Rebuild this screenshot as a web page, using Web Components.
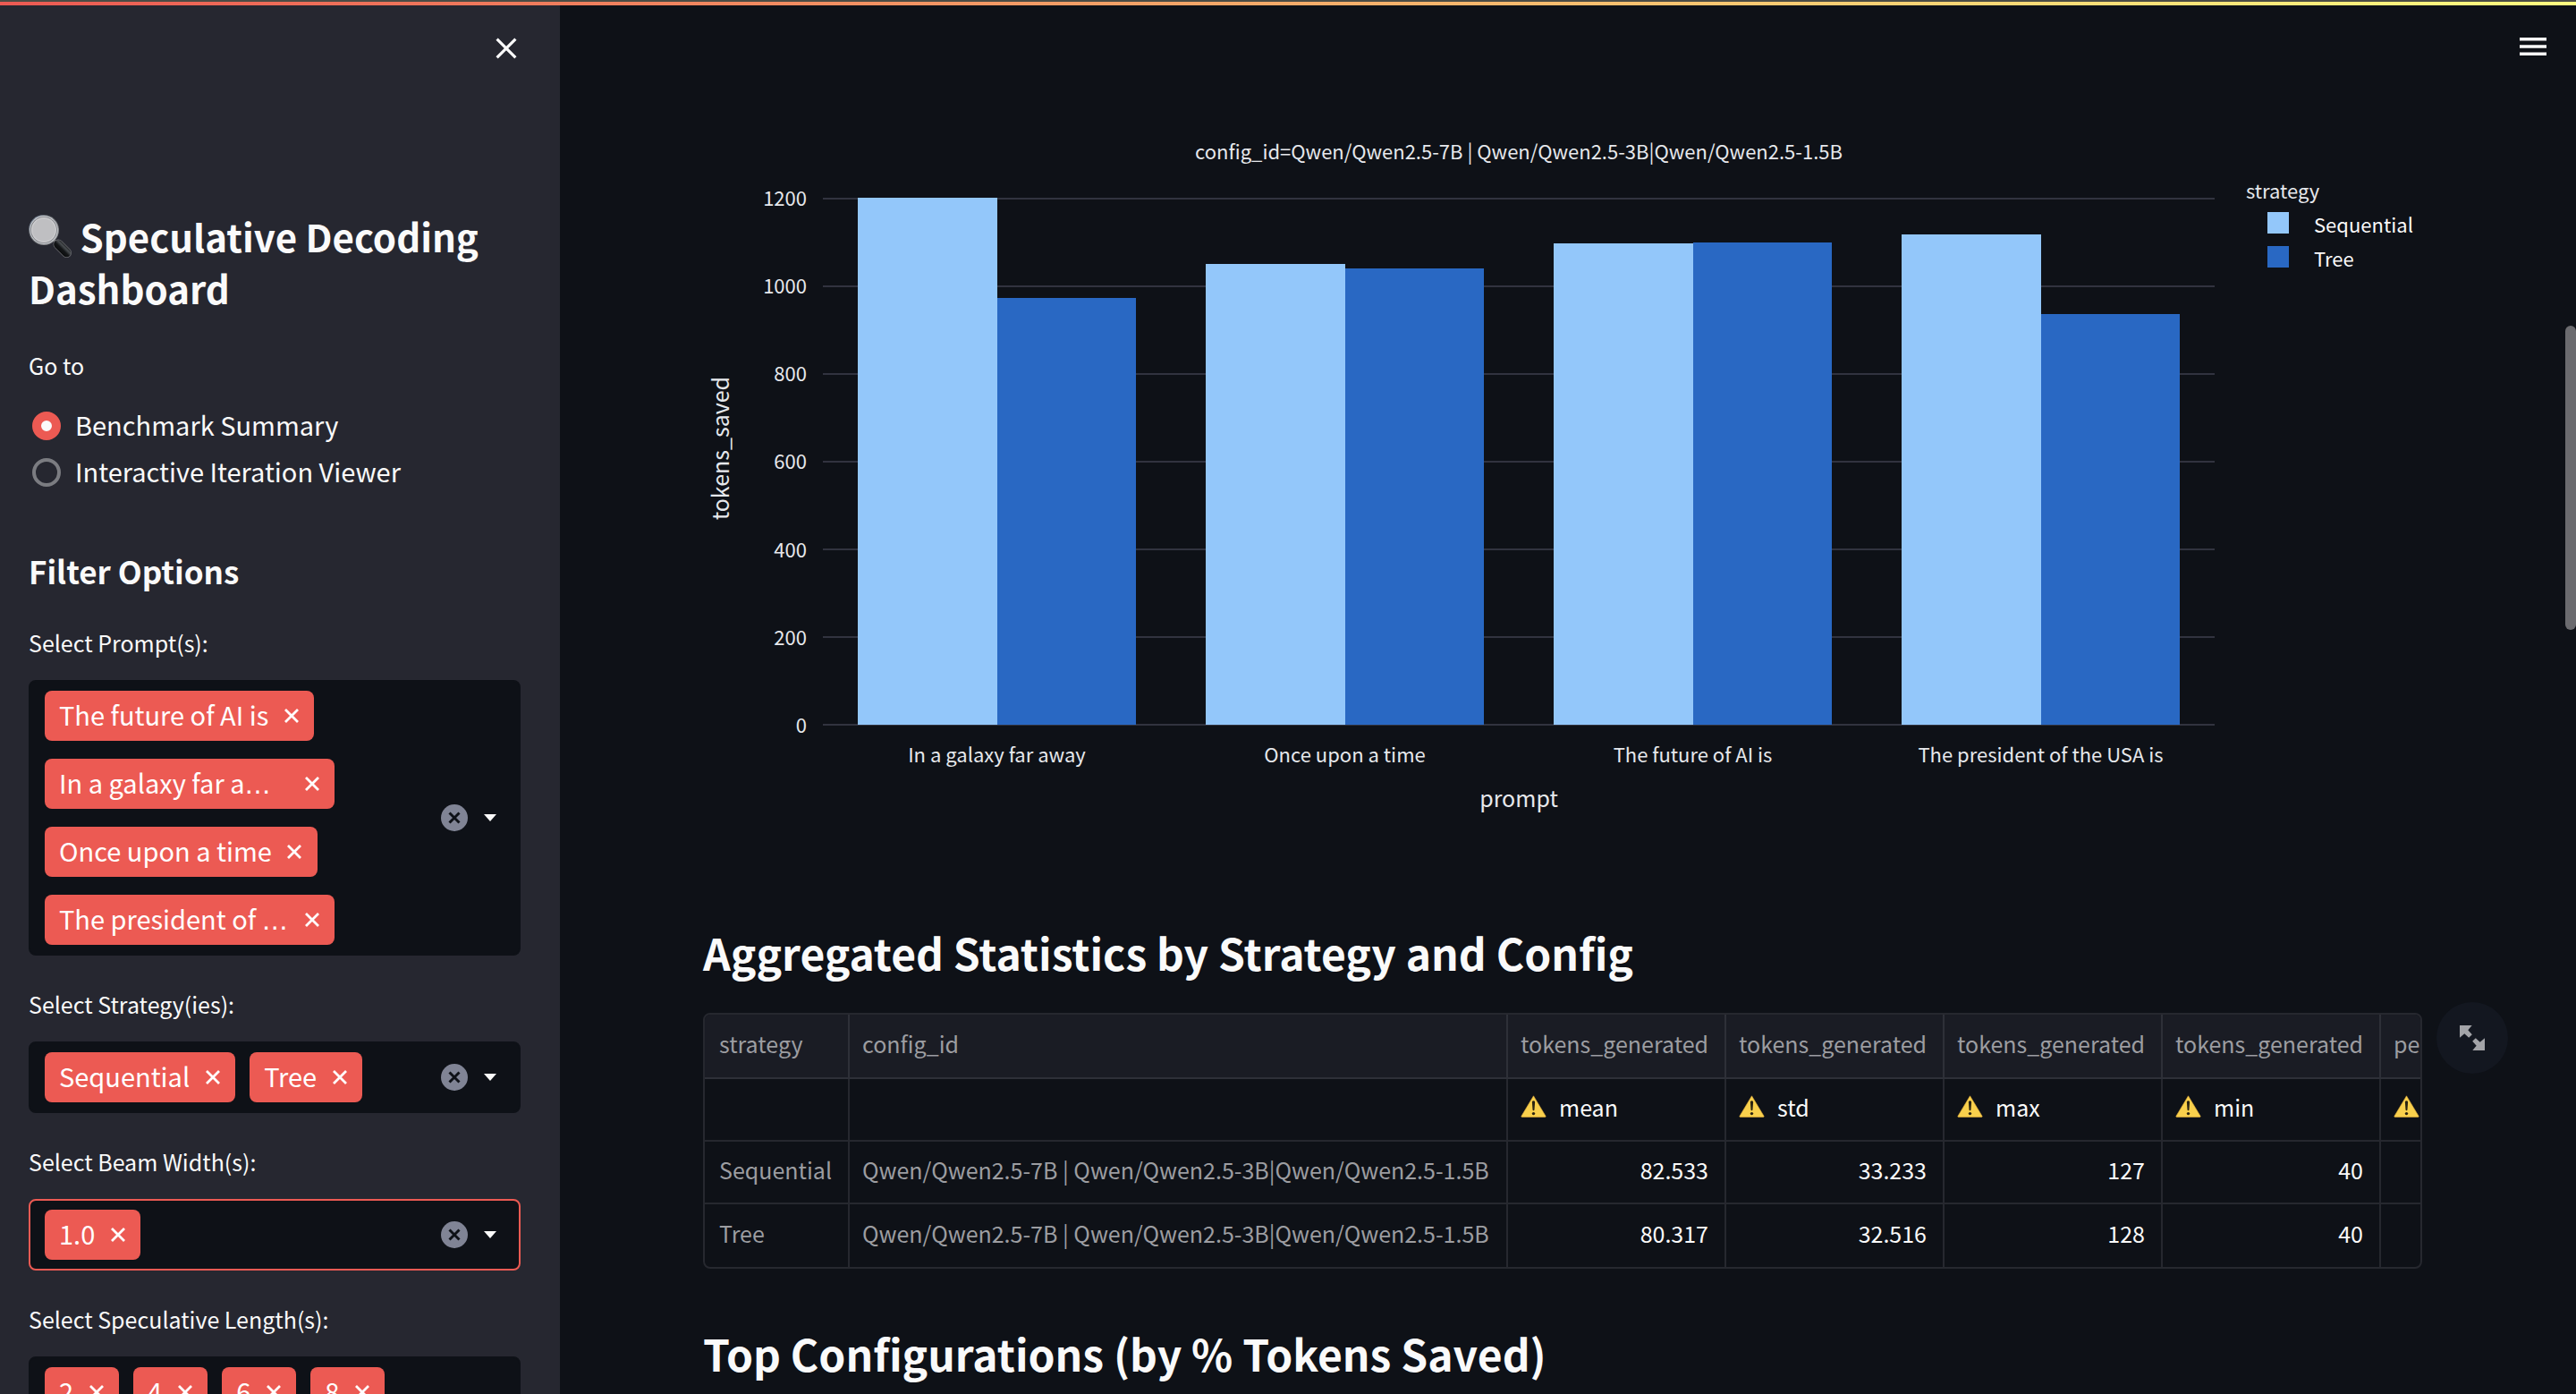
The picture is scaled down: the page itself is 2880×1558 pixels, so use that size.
<!DOCTYPE html>
<html lang="en">
<head>
<meta charset="utf-8">
<meta name="viewport" content="width=device-width, initial-scale=1">
<title>Speculative Decoding Dashboard</title>
<style>
  :root {
    --bg: #0e1117;
    --side: #262730;
    --text: #fafafa;
    --muted: #9c9da1;
    --primary: #ec5a53;
    --line: #26282f;
    --seq: #93c7fa;
    --tree: #2968c3;
  }
  html, body { margin: 0; height: 100%; overflow: hidden; background: var(--bg); }
  body {
    color: var(--text);
    font-family: "Source Sans Pro", "Noto Sans CJK JP", sans-serif;
    font-size: 25px;
    line-height: 40px;
  }
</style>
</head>
<body>
<dash-app>
  <dash-sidebar slot="sidebar">
    <nav-radio label="Go to" options="Benchmark Summary|Interactive Iteration Viewer"></nav-radio>
    <filter-group heading="Filter Options">
      <multi-select label="Select Prompt(s):" values="The future of AI is|In a galaxy far a…|Once upon a time|The president of …"></multi-select>
      <multi-select label="Select Strategy(ies):" values="Sequential|Tree"></multi-select>
      <multi-select label="Select Beam Width(s):" values="1.0" active></multi-select>
      <multi-select label="Select Speculative Length(s):" values="2|4|6|8" roomy></multi-select>
    </filter-group>
  </dash-sidebar>
  <bar-chart></bar-chart>
  <section-title>Aggregated Statistics by Strategy and Config</section-title>
  <stats-table></stats-table>
  <section-title>Top Configurations (by % Tokens Saved)</section-title>
</dash-app>

<script>
const define = (name, html, setup) => {
  const template = document.createElement('template');
  template.innerHTML = html;
  customElements.define(name, class extends HTMLElement {
    connectedCallback() {
      if (this.shadowRoot) return;
      const root = this.attachShadow({ mode: 'open' });
      root.append(template.content.cloneNode(true));
      if (setup) setup(this, root);
    }
  });
};

define('dash-app', `
  <style>
    :host { display: flex; height: 100vh; overflow: hidden; position: relative; }
    .strip { position: absolute; inset: 0 0 auto 0; height: 4px; border-top: 2px solid #4b4c45;
      background: linear-gradient(90deg, #ec5a53, #fffd80); z-index: 2; }
    main { flex: 1; min-width: 0; box-sizing: border-box; padding: 152px 172px 0 160px; overflow: hidden; }
    .menu { position: absolute; top: 28px; right: 24px; width: 48px; height: 48px; padding: 0; border: 0;
      background: none; color: var(--text); display: grid; place-items: center; }
    .thumb { position: absolute; right: 0; top: 364px; width: 12px; height: 340px; border-radius: 6px; background: #6b6b6f; }
  </style>
  <div class="strip"></div>
  <slot name="sidebar"></slot>
  <main><slot></slot></main>
  <button class="menu" aria-label="Menu">
    <svg width="30" height="20" viewBox="0 0 30 20" fill="currentColor"><path d="M0 0h30v3.4H0zM0 8.3h30v3.4H0zM0 16.6h30V20H0z"/></svg>
  </button>
  <div class="thumb"></div>
`);

define('dash-sidebar', `
  <style>
    :host { display: flex; flex-direction: column; flex: none; box-sizing: border-box; width: 626px; height: 100%;
      padding: 30px 44px 0 32px; background: var(--side); overflow: hidden; }
    header { flex: none; display: flex; justify-content: flex-end; padding-right: 0; height: 205px; margin-right: -8px; }
    header button { width: 48px; height: 48px; padding: 0; border: 0; background: none; color: var(--text);
      display: grid; place-items: center; }
    h1 { flex: none; margin: 0 0 37px; font-size: 42px; line-height: 58px; font-weight: 600; }
    h1 svg { vertical-align: -6px; }
  </style>
  <header><button aria-label="Close sidebar">
    <svg width="24" height="24" viewBox="0 0 24 24" fill="none" stroke="currentColor" stroke-width="3.2" stroke-linecap="butt"><path d="M1.6 1.6l20.8 20.8M22.4 1.6L1.6 22.4"/></svg>
  </button></header>
  <h1><svg width="48" height="48" viewBox="0 0 48 48" role="img" aria-label="Magnifying glass">
      <defs>
        <linearGradient id="rim" x1="0" y1="0" x2="1" y2="1"><stop offset="0" stop-color="#8fa3bd"/><stop offset=".3" stop-color="#5d6268"/><stop offset=".65" stop-color="#77787b"/><stop offset="1" stop-color="#a2a3a6"/></linearGradient>
        <linearGradient id="grip" gradientUnits="userSpaceOnUse" x1="34" y1="43" x2="43" y2="34"><stop offset="0" stop-color="#08090a"/><stop offset=".45" stop-color="#141618"/><stop offset=".7" stop-color="#4a4e52"/><stop offset="1" stop-color="#0a0b0c"/></linearGradient>
      </defs>
      <path d="M27 27l6 6" stroke="#77787b" stroke-width="3"/>
      <path d="M33 33L42.500 42.500" stroke="#6a6b70" stroke-width="11" stroke-linecap="round"/>
      <path d="M33 33L42.500 42.500" stroke="url(#grip)" stroke-width="9.600" stroke-linecap="round"/>
      <circle cx="17" cy="17" r="17" fill="url(#rim)"/>
      <circle cx="17" cy="17" r="15.900" fill="#c9ccd1"/>
      <circle cx="17" cy="17" r="14.800" fill="#77787c"/>
      <circle cx="17" cy="17" r="14" fill="#d0d0d3"/>
      <circle cx="17" cy="17" r="12.800" fill="#bfbfc2"/>
    </svg> Speculative Decoding Dashboard</h1>
  <slot></slot>
`);

define('nav-radio', `
  <style>
    :host { display: block; flex: none; margin-bottom: 60px; }
    fieldset { margin: 0; padding: 0; border: 0; }
    legend { padding: 0; margin-bottom: 22px; }
    label { display: flex; align-items: center; gap: 16px; height: 52px; padding-left: 4px; font-size: 29px; }
    label span { padding-bottom: 4px; }
    input { appearance: none; flex: none; box-sizing: border-box; width: 32px; height: 32px; margin: 0;
      border: 4px solid #7b7c81; border-radius: 50%; }
    input:checked { border: 10px solid var(--primary); background: var(--text); }
  </style>
  <fieldset><legend></legend></fieldset>
`, (host, root) => {
  root.querySelector('legend').textContent = host.getAttribute('label');
  host.getAttribute('options').split('|').forEach((text, i) => {
    const label = document.createElement('label');
    label.innerHTML = `<input type="radio" name="page"${i ? '' : ' checked'}><span>${text}</span>`;
    root.querySelector('fieldset').append(label);
  });
});

define('filter-group', `
  <style>
    :host { display: flex; flex-direction: column; flex: none; gap: 34px; }
    h2 { margin: 0 0 2px; font-size: 35px; line-height: 48px; font-weight: 600; }
  </style>
  <h2></h2><slot></slot>
`, (host, root) => { root.querySelector('h2').textContent = host.getAttribute('heading'); });

define('tag-chip', `
  <style>
    :host { display: flex; align-items: center; box-sizing: border-box; height: 56px; max-width: 324px; min-width: 0;
      padding-left: 16px; border-radius: 8px; background: var(--primary); color: #fff; font-size: 29px; line-height: 52px; }
    .text { flex: 1; min-width: 0; white-space: nowrap; padding-bottom: 4px; }
    :host([wide]) { width: 324px; }
    button { flex: none; width: 51px; height: 56px; padding: 0; border: 0; background: none; color: inherit;
      display: grid; place-items: center; }
  </style>
  <span class="text"><slot></slot></span>
  <button aria-label="Remove"><svg width="16" height="16" viewBox="0 0 16 16" stroke="currentColor" stroke-width="2.800"><path d="M1 1l14 14M15 1L1 15"/></svg></button>
`);

define('multi-select', `
  <style>
    :host { display: block; }
    label { display: block; margin-bottom: 22px; }
    .box { display: flex; align-items: center; box-sizing: border-box; min-height: 80px; padding: 10px 8px 10px 16px;
      border: 2px solid var(--bg); border-radius: 8px; background: var(--bg); }
    :host([active]) .box { border-color: var(--primary); }
    .tags { flex: 1; min-width: 0; display: flex; flex-wrap: wrap; gap: 20px 16px; }
    .dots { font-family: "DejaVu Sans", sans-serif; line-height: 1; }
    input { flex: 1; width: 2px; min-width: 2px; padding: 0; border: 0; outline: 0; background: none; color: inherit; font: inherit; }
    :host([roomy]) input { flex-basis: 100%; height: 56px; }
    .box > button { flex: none; padding: 0; border: 0; background: none; height: 32px; display: grid; place-items: center; color: var(--text); }
    .clear { width: 32px; }
    .open { width: 48px; }
  </style>
  <label for="field"></label>
  <div class="box">
    <div class="tags"><input id="field" role="combobox" aria-expanded="false"></div>
    <button class="clear" aria-label="Clear all"><svg width="30" height="30" viewBox="0 0 30 30"><circle cx="15" cy="15" r="15" fill="#808495"/><path d="M9.500 9.500l11 11M20.500 9.500l-11 11" stroke="#0e1117" stroke-width="3"/></svg></button>
    <button class="open" aria-label="Open"><svg width="14" height="8" viewBox="0 0 14 8"><path d="M0 0h14L7 8z" fill="currentColor"/></svg></button>
  </div>
`, (host, root) => {
  root.querySelector('label').textContent = host.getAttribute('label');
  const input = root.querySelector('input');
  for (const value of host.getAttribute('values').split('|')) {
    const chip = document.createElement('tag-chip');
    chip.innerHTML = value.replace('…', '<span class="dots">…</span>');
    if (value.includes('…')) chip.setAttribute('wide', '');
    input.before(chip);
  }
});

define('bar-chart', `
  <style>
    :host { display: grid; grid-template-columns: 36px 98px 1fr 232px; color: #e6e8ec; font-size: 22px; line-height: 32px; }
    .title { grid-column: 3; text-align: center; margin-bottom: 8px; }
    .ytitle { grid-column: 1; grid-row: 2; align-self: center; justify-self: center; writing-mode: vertical-rl;
      rotate: 180deg; font-size: 25px; line-height: 36px; }
    .ticks { grid-column: 2; grid-row: 2; display: flex; flex-direction: column; justify-content: space-between;
      text-align: right; padding: 12px 18px 0 0; margin-bottom: -14px; }
    .plot { grid-column: 3; grid-row: 2; display: grid; padding-top: 29px; }
    .lines, .bars { grid-area: 1 / 1; }
    .lines i { display: block; height: 96px; border-bottom: 2px solid #31333f; }
    .lines i:first-child { border-top: 2px solid #31333f; }
    .bars { display: flex; margin: 1px 0; }
    .group { flex: 1; display: flex; justify-content: center; align-items: flex-end; }
    .group b { width: 40%; background: var(--seq); height: calc(var(--v) / 1200 * 100%); }
    .group b + b { background: var(--tree); }
    .names { grid-column: 3; display: flex; margin-top: 15px; text-align: center; }
    .names span { flex: 1; }
    .xtitle { grid-column: 3; text-align: center; margin: 13px 0 119px; font-size: 25px; line-height: 40px; }
    .legend { grid-column: 4; grid-row: 2; padding: 4px 0 0 35px; }
    .legend div { display: flex; align-items: center; gap: 28px; height: 38px; padding-left: 24px; color: var(--text); }
    .legend p { margin: 0 0 3px; }
    .legend i { width: 24px; height: 24px; margin-bottom: 2px; background: var(--c); }
  </style>
  <div class="title">config_id=Qwen/Qwen2.5-7B | Qwen/Qwen2.5-3B|Qwen/Qwen2.5-1.5B</div>
  <div class="ytitle">tokens_saved</div>
  <div class="ticks"><span>1200</span><span>1000</span><span>800</span><span>600</span><span>400</span><span>200</span><span>0</span></div>
  <div class="plot">
    <div class="lines"><i></i><i></i><i></i><i></i><i></i><i></i></div>
    <div class="bars"></div>
  </div>
  <div class="legend"><p>strategy</p>
    <div style="--c: var(--seq)"><i></i>Sequential</div>
    <div style="--c: var(--tree)"><i></i>Tree</div>
  </div>
  <div class="names"></div>
  <div class="xtitle">prompt</div>
`, (host, root) => {
  const data = [
    ['In a galaxy far away', 1202, 973],
    ['Once upon a time', 1051, 1041],
    ['The future of AI is', 1097, 1100],
    ['The president of the USA is', 1118, 937],
  ];
  root.querySelector('.bars').innerHTML = data.map(d =>
    `<div class="group"><b style="--v:${d[1]}"></b><b style="--v:${d[2]}"></b></div>`).join('');
  root.querySelector('.names').innerHTML = data.map(d => `<span>${d[0]}</span>`).join('');
});

define('section-title', `
  <style>
    :host { display: block; margin-bottom: 34px; }
    h2 { margin: 0; font-size: 48px; line-height: 68px; font-weight: 600; white-space: nowrap; }
  </style>
  <h2><slot></slot></h2>
`);

define('stats-table', `
  <style>
    :host { display: block; position: relative; margin-bottom: 60px; }
    .frame { border: 2px solid var(--line); border-radius: 8px; overflow: hidden; }
    table { table-layout: fixed; width: 2118px; border-collapse: separate; border-spacing: 0; }
    th, td { box-sizing: border-box; height: 70px; padding: 0 18px 6px 14px; border: solid var(--line); border-width: 0 2px 2px 0;
      font-weight: 400; text-align: left; white-space: nowrap; overflow: hidden; color: var(--muted); }
    th:first-child { padding: 0 12px 6px 16px; }
    thead th { height: 72px; background: #1a1c24; border-color: #2e3038; }
    tbody tr:last-child > * { border-bottom: 0; }
    td { color: var(--text); }
    td.num { text-align: right; }
    td svg { vertical-align: -1px; margin-right: 14px; }
    .full { position: absolute; top: -12px; right: -96px; width: 80px; height: 80px; padding: 0; border: 0; border-radius: 50%;
      background: #131720; color: #a3a4a8; display: grid; place-items: center; }
  </style>
  <div class="frame"><table>
    <colgroup><col style="width:162px"><col style="width:736px"><col span="5" style="width:244px"></colgroup>
    <thead><tr></tr></thead><tbody></tbody>
  </table></div>
  <button class="full" aria-label="View fullscreen">
    <svg width="28" height="28" viewBox="0 0 28 28" fill="currentColor"><path d="M0 0h13.700L9.300 5.300l4.500 4.900-3.600 3.600-4.900-4.500L0 13.700zM28 28H14.300l4.400-5.300-4.500-4.900 3.600-3.600 4.900 4.500L28 14.300z"/></svg>
  </button>
`, (host, root) => {
  const model = 'Qwen/Qwen2.5-7B | Qwen/Qwen2.5-3B|Qwen/Qwen2.5-1.5B';
  const warn = `<svg width="29" height="25" viewBox="0 0 29 25" role="img" aria-label="Warning"><path d="M14.500.8L28 23.300q.5 1.200-.7 1.200H1.700Q.5 24.500 1 23.300z" fill="#f9d04c" stroke="#d9a63a" stroke-width=".6" stroke-linejoin="round"/><path d="M14.500 6.300c1.300 0 1.700.9 1.600 2l-.6 7.900q-.1 1-1 1t-1-1l-.6-7.900c-.1-1.100.3-2 1.600-2z" fill="#2b2412"/><circle cx="14.500" cy="20.600" r="1.700" fill="#2b2412"/></svg>`;
  root.querySelector('thead tr').innerHTML =
    ['strategy', 'config_id', 'tokens_generated', 'tokens_generated', 'tokens_generated', 'tokens_generated', 'pe'].map(t => `<th scope="col">${t}</th>`).join('');
  const stats = ['mean', 'std', 'max', 'min', ''].map(t => `<td>${warn}${t}</td>`).join('');
  const rows = [['Sequential', '82.533', '33.233', '127', '40', ''], ['Tree', '80.317', '32.516', '128', '40', '']];
  root.querySelector('tbody').innerHTML = `<tr><td></td><td></td>${stats}</tr>` + rows.map(([name, ...nums]) =>
    `<tr><th scope="row">${name}</th><th>${model}</th>${nums.map(n => `<td class="num">${n}</td>`).join('')}</tr>`).join('');
});
</script>
</body>
</html>
